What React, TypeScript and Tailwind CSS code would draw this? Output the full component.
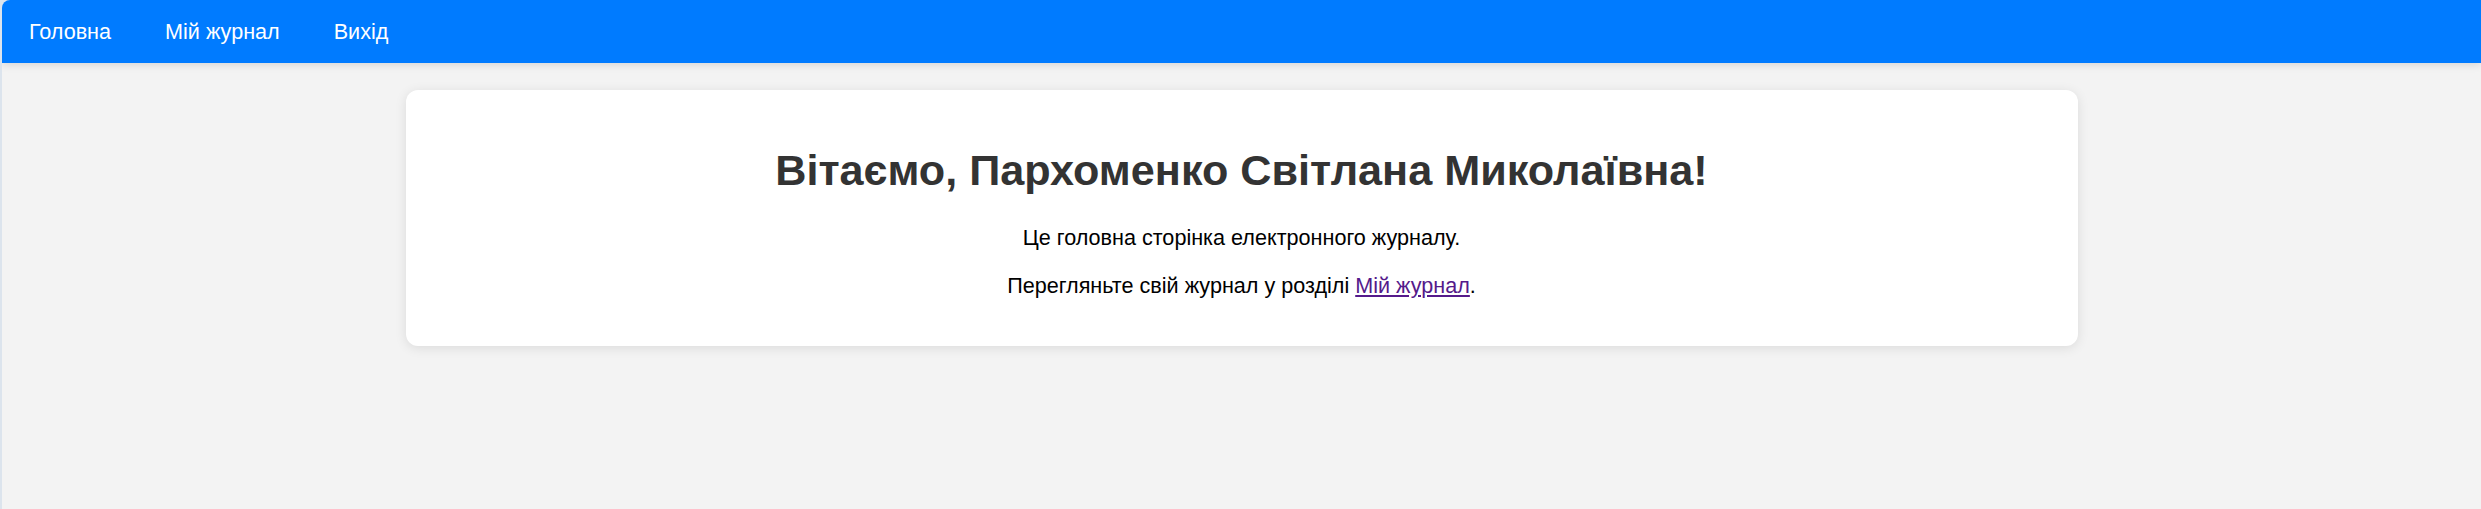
import React from "react";

export default function App() {
  return (
    <div
      className="min-h-[509px] w-full bg-[#dce4ed] pl-[2px] flex"
      style={{ fontFamily: '"Liberation Sans", Arial, sans-serif' }}
    >
      <div className="flex-1 min-h-[509px] bg-[#f3f3f3] rounded-tl-[8px] overflow-hidden flex flex-col">
        <nav className="h-[63px] bg-[#007bff] flex items-center pl-[27px] gap-[54px] shadow-[0_2px_8px_rgba(0,0,0,0.12)] relative z-10">
          <a className="text-white text-[21.6px] leading-none no-underline" href="#">Головна</a>
          <a className="text-white text-[21.6px] leading-none no-underline" href="#">Мій журнал</a>
          <a className="text-white text-[21.6px] leading-none no-underline" href="#">Вихід</a>
        </nav>
        <div className="flex justify-center pt-[27px]">
          <div className="w-[1672px] h-[256px] bg-white rounded-[12px] shadow-[0_2px_12px_rgba(0,0,0,0.1)] px-[30px] pt-[55px] text-center">
            <h1 className="text-[43.2px] font-bold text-[#333333] leading-[50px] mb-[30px]">
              Вітаємо, Пархоменко Світлана Миколаївна!
            </h1>
            <p className="text-[21.6px] text-black leading-[25px] mb-[23px]">
              Це головна сторінка електронного журналу.
            </p>
            <p className="text-[21.6px] text-black leading-[25px]">
              Перегляньте свій журнал у розділі{" "}
              <a href="#" className="text-[#551a8b] underline">Мій журнал</a>.
            </p>
          </div>
        </div>
      </div>
    </div>
  );
}
